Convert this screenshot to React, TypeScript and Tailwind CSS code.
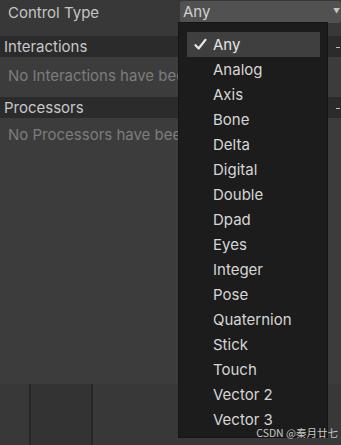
import React from 'react';

const controlTypes = [
  'Any',
  'Analog',
  'Axis',
  'Bone',
  'Delta',
  'Digital',
  'Double',
  'Dpad',
  'Eyes',
  'Integer',
  'Pose',
  'Quaternion',
  'Stick',
  'Touch',
  'Vector 2',
  'Vector 3',
];

function SectionHeader({ title }: { title: string }) {
  return (
    <div className="flex h-[21px] items-center justify-between bg-[#2b2b2b] pl-1 pt-[2px] text-[15px] text-[#c8c8c8]">
      <span>{title}</span>
      <span className="mr-[1px] h-[1px] w-[4px] bg-[#bdbdbd]" />
    </div>
  );
}

export default function App() {
  const selected = 'Any';

  return (
    <div className="relative h-[445px] w-[341px] overflow-hidden bg-[#383838] font-['Inter',sans-serif]">
      {/* Control type row */}
      <div className="flex h-[23px] items-center">
        <span className="w-[180px] pl-2 pt-[3px] text-[15px] text-[#c4c4c4]">Control Type</span>
        <div className="flex h-[22px] flex-1 items-center justify-between rounded-[3px] bg-[#515151] pl-[3px] pt-[1px] text-[15px] text-[#d0d0d0]">
          <span>Any</span>
          <span className="mr-[1px] text-[7px] text-[#c4c4c4]">▼</span>
        </div>
      </div>
      <div className="h-[13px]" />

      <SectionHeader title="Interactions" />
      <div className="h-[40px] bg-[#3c3c3c] pl-2 pt-[8px] text-[15px] whitespace-nowrap text-[#7d7d7d]">
        No Interactions have been added.
      </div>

      <SectionHeader title="Processors" />
      <div className="h-[266px] bg-[#3c3c3c] pl-2 pt-[6px] text-[15px] whitespace-nowrap text-[#7d7d7d]">
        No Processors have been added.
      </div>

      {/* bottom toolbar */}
      <div className="flex h-[61px] pl-[29px]">
        <div className="w-[64px] border-x-2 border-[#262626] bg-[#333333]" />
      </div>

      {/* dropdown menu */}
      <div className="absolute left-[178px] top-[22px] h-[416px] w-[150px] border border-[#151515] bg-[#1c1c1c] pt-[9px] pl-[8px]">
        {controlTypes.map((t) => (
          <div
            key={t}
            className={`flex h-[25px] w-[133px] items-center text-[15px] ${
              t === selected ? 'bg-[#3f3f3f] text-[#e6e6e6]' : 'text-[#d6d6d6]'
            }`}
          >
            <span className="flex w-[26px] justify-center pl-[1px]">
              {t === selected && (
                <svg width="13" height="13" viewBox="0 0 13 13">
                  <path d="M1.5 7.2 L4.6 10.5 L11.5 1.8" fill="none" stroke="#e6e6e6" strokeWidth="2.2" strokeLinecap="round" strokeLinejoin="round" />
                </svg>
              )}
            </span>
            <span className="pt-[1px]">{t}</span>
          </div>
        ))}
      </div>

      {/* watermark */}
      <div className="absolute bottom-[4px] right-[3px] font-['Noto_Sans_CJK_SC',sans-serif] text-[10.5px] text-[#c8c8c8]">
        CSDN @秦月廿七
      </div>
    </div>
  );
}
